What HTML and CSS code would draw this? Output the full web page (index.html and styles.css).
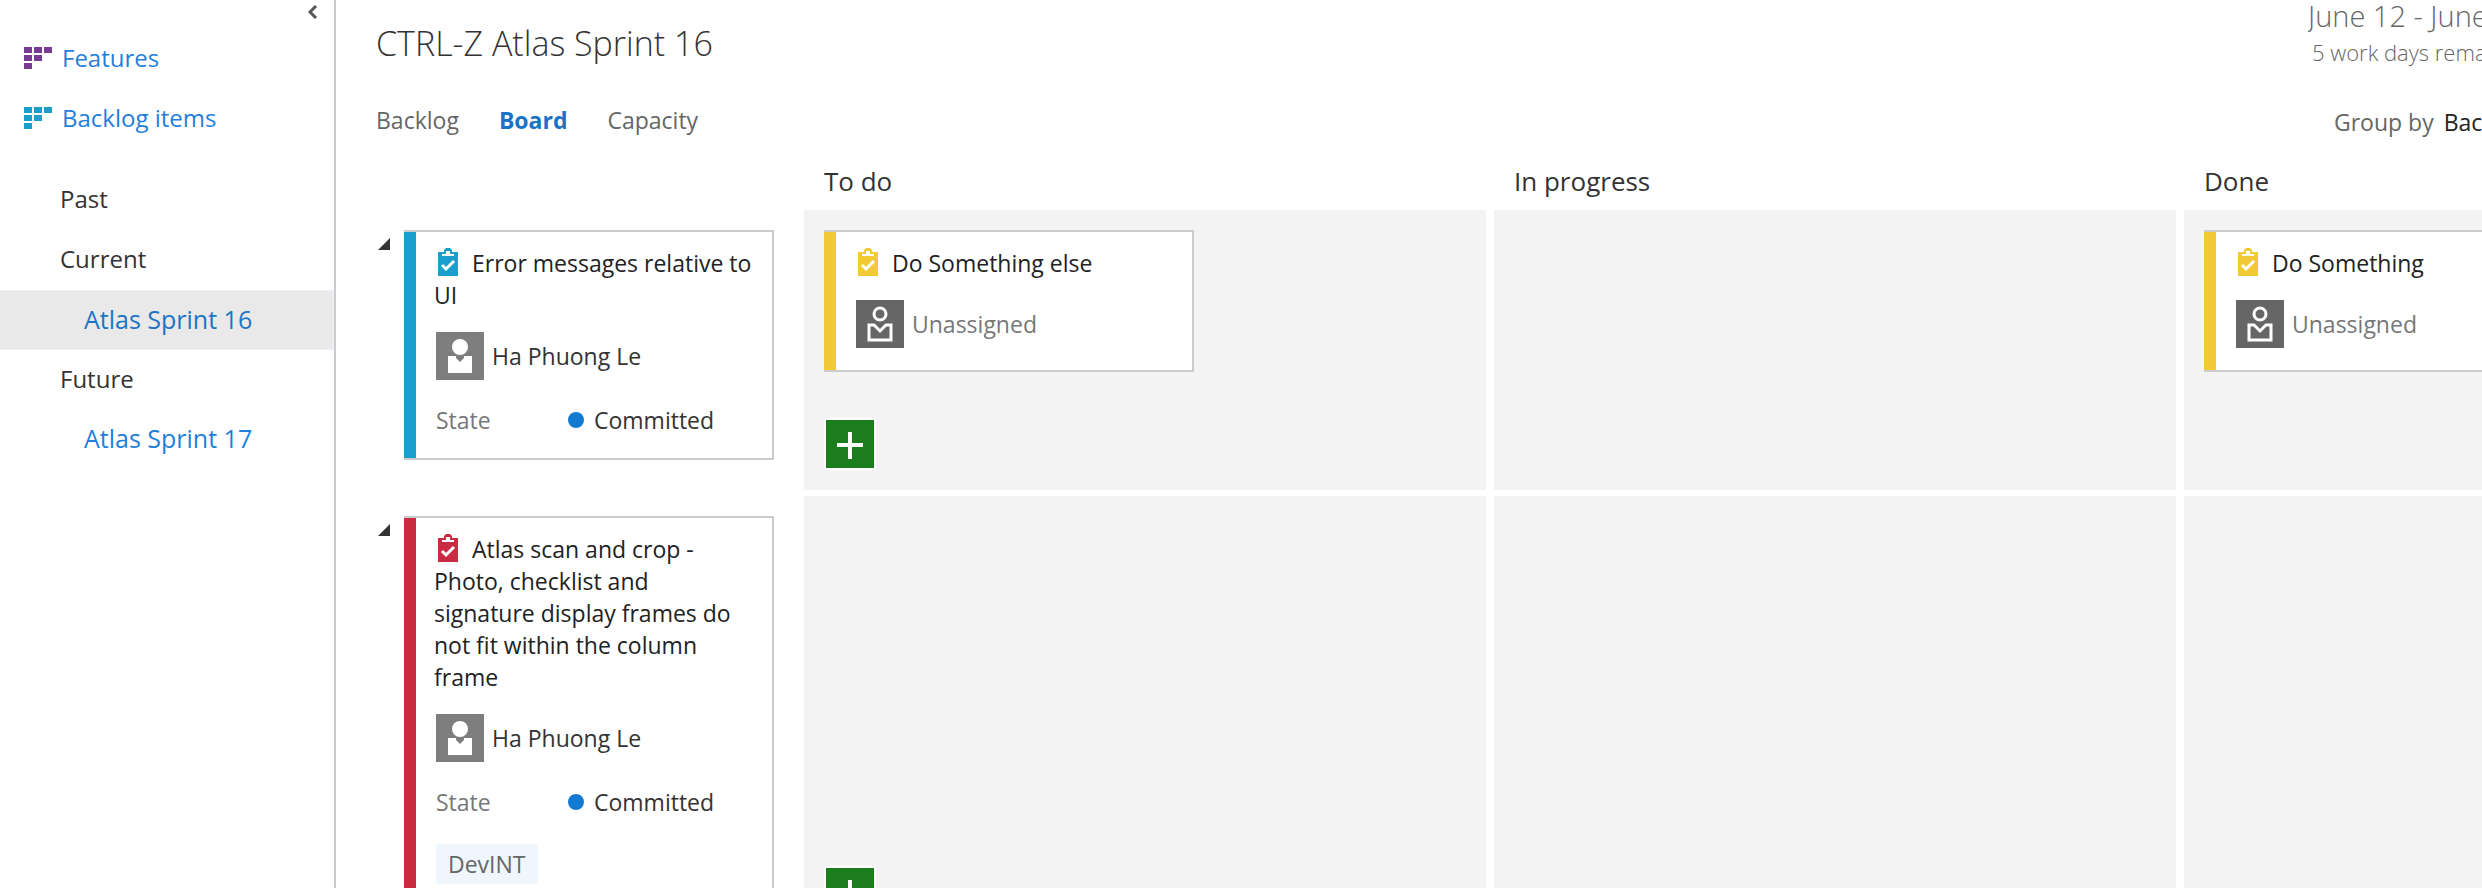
FILE: index.html
```
<!DOCTYPE html>
<html lang="en">
<head>
    <meta charset="UTF-8">
    <meta name="viewport" content="width=device-width, initial-scale=1.0">
    <title>CTRL-Z Atlas Sprint 16 - Board</title>
    <link rel="stylesheet" href="styles.css">
</head>
<body>
    <!-- shared icons -->
    <svg class="sprites" aria-hidden="true">
        <symbol id="icon-task" viewBox="0 0 20 28">
            <path fill="currentColor" d="M0 4h6V2l2-2h4l2 2v2h6v24H0z"/>
            <path fill="#fff" d="M4 8V6h4V3h4v3h4v2z"/>
            <path fill="none" stroke="#fff" stroke-width="3" d="M4 17l4 4 8-8"/>
        </symbol>
        <symbol id="icon-levels" viewBox="0 0 29 22">
            <path fill="currentColor" d="M0 0h8v6H0zM10 0h8v6h-8zM20 0h8v6h-8zM0 8h8v6H0zM10 8h8v6h-8zM0 16h8v6H0z"/>
        </symbol>
        <symbol id="icon-person" viewBox="0 0 48 48">
            <path fill="#7e7e7e" d="M0 0h48v48H0z"/>
            <circle cx="24" cy="15" r="8" fill="#fff"/>
            <path fill="#fff" d="M12 24h8v2l4 4 4-4v-2h8v17H12z"/>
        </symbol>
        <symbol id="icon-nobody" viewBox="0 0 48 48">
            <path fill="#666" d="M0 0h48v48H0z"/>
            <circle cx="24" cy="14" r="6" fill="none" stroke="#fff" stroke-width="3"/>
            <path fill="none" stroke="#fff" stroke-width="3" d="M13 25h5l6 6 6-6h5v15H13z"/>
        </symbol>
        <symbol id="icon-plus" viewBox="0 0 48 48">
            <path fill="none" stroke="#fff" stroke-width="4" d="M24 12v27M11 25h26"/>
        </symbol>
    </svg>

    <div class="page">
        <nav class="sidebar">
            <button class="collapse" aria-label="Collapse">
                <svg width="10" height="14" viewBox="0 0 10 14"><path fill="none" stroke="#555" stroke-width="3" d="M8 1L2 7l6 6"/></svg>
            </button>
            <a class="level features" href="#"><svg width="29" height="22"><use href="#icon-levels"/></svg>Features</a>
            <a class="level items" href="#"><svg width="29" height="22"><use href="#icon-levels"/></svg>Backlog items</a>
            <div class="sprints">
                <div class="period">Past</div>
                <div class="period">Current</div>
                <a class="sprint selected" href="#">Atlas Sprint 16</a>
                <div class="period">Future</div>
                <a class="sprint" href="#">Atlas Sprint 17</a>
            </div>
        </nav>

        <main class="main">
            <header class="header">
                <h1>CTRL-Z Atlas Sprint 16</h1>
                <div class="dates">
                    <div class="range">June 12 - June 23</div>
                    <div class="remaining">5 work days remaining</div>
                </div>
            </header>
            <div class="toolbar">
                <div class="tabs">
                    <a href="#">Backlog</a>
                    <a class="active" href="#">Board</a>
                    <a href="#">Capacity</a>
                </div>
                <div class="group">Group by <button>Backlog items</button></div>
            </div>

            <div class="board">
                <div></div>
                <h2>To do</h2>
                <h2>In progress</h2>
                <h2>Done</h2>

                <div class="parent">
                    <button class="toggle" aria-label="Collapse row"><svg width="12" height="12"><path fill="#333" d="M12 0v12H0z"/></svg></button>
                    <article class="card blue">
                        <div class="title"><svg class="type" width="20" height="28"><use href="#icon-task"/></svg>Error messages relative to UI</div>
                        <div class="person"><svg width="48" height="48"><use href="#icon-person"/></svg>Ha Phuong Le</div>
                        <div class="state"><span class="label">State</span><span class="dot"></span>Committed</div>
                    </article>
                </div>
                <div class="cell">
                    <article class="card yellow">
                        <div class="title"><svg class="type" width="20" height="28"><use href="#icon-task"/></svg>Do Something else</div>
                        <div class="person nobody"><svg width="48" height="48"><use href="#icon-nobody"/></svg>Unassigned</div>
                    </article>
                    <button class="add" aria-label="Add task"><svg width="48" height="48"><use href="#icon-plus"/></svg></button>
                </div>
                <div class="cell"></div>
                <div class="cell">
                    <article class="card yellow">
                        <div class="title"><svg class="type" width="20" height="28"><use href="#icon-task"/></svg>Do Something</div>
                        <div class="person nobody"><svg width="48" height="48"><use href="#icon-nobody"/></svg>Unassigned</div>
                    </article>
                </div>

                <div class="parent">
                    <button class="toggle" aria-label="Collapse row"><svg width="12" height="12"><path fill="#333" d="M12 0v12H0z"/></svg></button>
                    <article class="card red">
                        <div class="title"><svg class="type" width="20" height="28"><use href="#icon-task"/></svg>Atlas scan and crop - Photo, checklist and signature display frames do not fit within the column frame</div>
                        <div class="person"><svg width="48" height="48"><use href="#icon-person"/></svg>Ha Phuong Le</div>
                        <div class="state"><span class="label">State</span><span class="dot"></span>Committed</div>
                        <span class="tag">DevINT</span>
                    </article>
                </div>
                <div class="cell">
                    <button class="add" aria-label="Add task"><svg width="48" height="48"><use href="#icon-plus"/></svg></button>
                </div>
                <div class="cell"></div>
                <div class="cell"></div>
            </div>
        </main>
    </div>
</body>
</html>
```
FILE: styles.css
```
* {
    box-sizing: border-box;
}
body {
    margin: 0;
    font-family: "Open Sans", "Noto Sans", sans-serif;
    font-size: 23px;
    line-height: 32px;
    color: #333;
    background: #fff;
}
a {
    color: #1f7fdb;
    text-decoration: none;
}
button {
    padding: 0;
    border: 0;
    background: none;
    font: inherit;
    color: inherit;
    cursor: pointer;
}
svg {
    display: block;
    flex: none;
}
.sprites {
    display: none;
}
.page {
    display: flex;
    height: 100vh;
    overflow: hidden;
}

/* sidebar */
.sidebar {
    flex: none;
    width: 336px;
    border-right: 2px solid #ccc;
    font-size: 24px;
}
.collapse {
    display: block;
    height: 28px;
    margin-left: auto;
    padding: 0 16px 4px;
}
.level {
    display: flex;
    align-items: center;
    gap: 9px;
    height: 60px;
    padding-left: 24px;
}
.features svg {
    color: #773b93;
}
.items svg {
    color: #1a9fcd;
}
.sprints {
    margin-top: 22px;
}
.period,
.sprint {
    display: block;
    height: 60px;
    padding-left: 60px;
    line-height: 58px;
}
.sprint {
    padding-left: 84px;
    font-size: 25px;
    line-height: 56px;
}
.selected {
    color: #1e74c4;
    background: #e9e9e9;
    border: 1px solid #eaf2fb;
    border-left: 0;
}

/* header */
.main {
    flex: 1;
    min-width: 0;
    padding-left: 40px;
    overflow: hidden;
}
.header,
.toolbar {
    display: flex;
    justify-content: space-between;
    white-space: nowrap;
}
.header {
    height: 96px;
}
h1 {
    margin: 0;
    padding-top: 19px;
    font-size: 34px;
    font-weight: 300;
    line-height: 48px;
}
.dates {
    width: 174px;
    overflow: hidden;
    color: #666;
    font-weight: 300;
}
.range {
    margin-bottom: 4px;
    font-size: 29px;
}
.remaining {
    padding-left: 4px;
    font-size: 22px;
}
.tabs {
    display: flex;
    gap: 40px;
    padding-top: 8px;
}
.tabs a {
    color: #666;
}
.tabs .active {
    color: #1a73c7;
    font-weight: 700;
}
.group {
    width: 148px;
    padding-top: 10px;
    overflow: hidden;
    color: #666;
}
.group button {
    margin-left: 4px;
    color: #222;
}

/* board */
.board {
    display: grid;
    grid-template-columns: 420px repeat(3, minmax(682px, 1fr));
    gap: 6px 8px;
}
h2 {
    margin: 0;
    padding: 25px 20px 0;
    height: 66px;
    font-size: 26px;
    font-weight: 400;
    line-height: 36px;
}
.parent {
    display: flex;
    align-items: flex-start;
    gap: 14px;
    padding: 20px 0 30px 2px;
}
.toggle {
    margin-top: 8px;
}
.cell {
    display: flex;
    flex-direction: column;
    align-items: flex-start;
    padding: 20px 20px 22px;
    background: #f3f3f3;
}
.card {
    width: 370px;
    padding: 15px 18px 22px 32px;
    border: 2px solid #ccc;
    border-left-width: 0;
    background: #fff;
    box-shadow: inset 12px 0 0 currentColor;
}
.title {
    margin: 0 0 21px -2px;
    color: #222;
}
.type {
    display: inline-block;
    margin: 0 14px 0 4px;
    vertical-align: -4px;
}
.person {
    display: flex;
    align-items: center;
    gap: 8px;
    color: #333;
}
.state {
    display: flex;
    align-items: center;
    margin-top: 24px;
    color: #333;
}
.label {
    width: 132px;
    color: #777;
}
.dot {
    width: 16px;
    height: 16px;
    margin-right: 10px;
    border-radius: 50%;
    background: #137ad1;
}
.nobody {
    color: #777;
}
.tag {
    display: inline-block;
    margin-top: 26px;
    padding: 4px 12px;
    color: #666;
    background: #eff6fd;
    vertical-align: top;
}
.add {
    margin: auto 0 0 2px;
    background: #1b7d1b;
    outline: 2px solid #fff;
}

/* left stripe and icon colour by work item type */
.blue,
.blue .type {
    color: #1a9fcd;
}
.red,
.red .type {
    color: #c92c42;
}
.yellow,
.yellow .type {
    color: #f2ca36;
}
```
